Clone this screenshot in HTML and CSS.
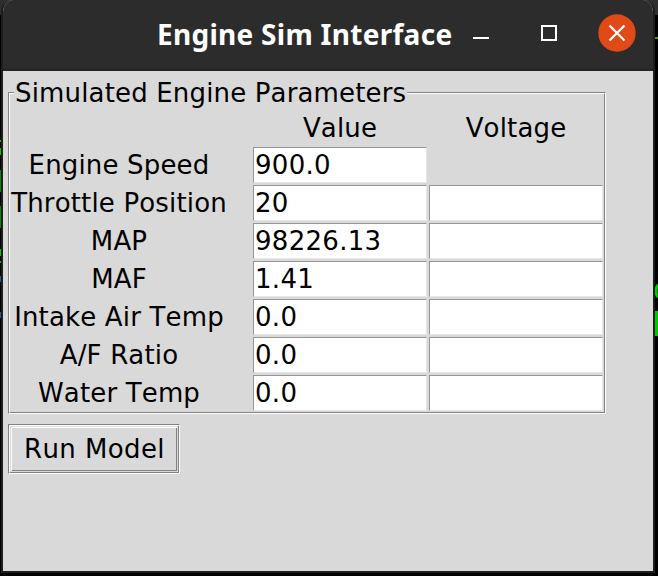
FILE: index.html
```html
<!DOCTYPE html>
<html lang="en">
<head>
<meta charset="utf-8">
<title>Engine Sim Interface</title>
<link rel="stylesheet" href="styles.css">
</head>
<body>
<svg class="desktop" width="658" height="576" viewBox="0 0 658 576" aria-hidden="true">
  <path fill="#2e2e2e" d="M0 0h12v15H0zM646 0h12v15h-12z"/>
  <path fill="#00c800" d="M0 140h1v2H0zM0 148h1v7H0zM0 249h1v7H0zM0 261h1v2H0zM655 311h3v25h-3z"/>
  <path fill="#008c00" d="M0 170h1v22H0zM0 206h1v22H0z"/>
  <path fill="#2a559c" d="M0 276h1v6H0zM0 312h1v6H0z"/>
  <path fill="#4e9a06" d="M655 37h3v2h-3z"/>
  <path fill="none" stroke="#00c800" stroke-width="3" d="M659 285q-3 1-3 6t3 6"/>
</svg>
<main class="window">
  <header class="titlebar">
    <h1 class="title">Engine Sim Interface</h1>
    <svg class="controls" width="166" height="40" viewBox="0 0 166 40" aria-hidden="true">
      <path fill="#fff" d="M3 24h16v2H3z"/>
      <path fill="none" stroke="#fff" stroke-width="2" d="M72 13h14v14H72z"/>
      <circle cx="147" cy="20" r="18.7" fill="#df4a16"/>
      <path fill="none" stroke="#fff" stroke-width="2.2" d="M139.500 12.500l15 15m0-15l-15 15"/>
    </svg>
  </header>
  <div class="content">
    <fieldset class="params">
      <legend class="legend">Simulated Engine Parameters</legend>
      <div class="grid">
        <span class="head value-head">Value</span><span class="head">Voltage</span>
        <span class="name">Engine Speed</span><span class="entry">900.0</span><span></span>
        <span class="name">Throttle Position</span><span class="entry">20</span><span class="entry"></span>
        <span class="name">MAP</span><span class="entry">98226.13</span><span class="entry"></span>
        <span class="name">MAF</span><span class="entry">1.41</span><span class="entry"></span>
        <span class="name">Intake Air Temp</span><span class="entry">0.0</span><span class="entry"></span>
        <span class="name">A/F Ratio</span><span class="entry">0.0</span><span class="entry"></span>
        <span class="name">Water Temp</span><span class="entry">0.0</span><span class="entry"></span>
      </div>
    </fieldset>
    <div class="button-frame"><button class="run" type="button">Run Model</button></div>
  </div>
</main>
</body>
</html>
```
FILE: styles.css
```css
* { box-sizing: border-box; }
body {
  margin: 0;
  width: 658px;
  height: 576px;
  overflow: hidden;
  background: #000;
  color: #000;
  font: 26px/32px "DejaVu Sans", sans-serif;
  font-kerning: none;
  letter-spacing: 0.16px;
}
.desktop { position: absolute; left: 0; top: 0; }
.window {
  position: relative;
  width: 654px;
  height: 573px;
  margin-left: 1px;
  border: solid #1d1d1d;
  border-width: 0 2px 2px;
  border-radius: 12px 12px 0 0;
  background: #d9d9d9;
  overflow: hidden;
}
.titlebar {
  display: flex;
  align-items: flex-start;
  height: 71px;
  padding: 13px 0 0 154px;
  background: #2c2c2c;
  border-bottom: 2px solid #242424;
}
.title {
  margin: 3px 0 0;
  width: 313px;
  color: #fff;
  font: bold 28px/36px "Noto Sans", sans-serif;
  letter-spacing: 0.28px;
  white-space: nowrap;
}
.controls { flex: none; }
.content { padding: 5px; }
.params {
  position: relative;
  width: 598px;
  height: 322px;
  margin: 16px 0 0;
  padding: 0;
  border: 1px solid #828282;
  border-right-color: #fff;
  border-bottom-color: #fff;
}
.params::before {
  content: "";
  position: absolute;
  inset: 0;
  border: 1px solid #fff;
  border-right-color: #828282;
  border-bottom-color: #828282;
}
.legend {
  position: absolute;
  left: 5px;
  top: -16px;
  padding: 0 1px;
  background: #d9d9d9;
  white-space: nowrap;
}
.grid {
  position: relative;
  display: grid;
  grid-template-columns: 241px 174px 174px;
  column-gap: 2px;
  grid-template-rows: 36px;
  grid-auto-rows: 36px;
  row-gap: 2px;
  padding: 16px 0 0 1px;
}
.head, .name {
  text-align: center;
  line-height: 36px;
  white-space: nowrap;
}
.head { line-height: 38px; }
.value-head { grid-column: 2; }
.name { width: 218px; }
.entry {
  padding: 0 1px;
  line-height: 35px;
  letter-spacing: 0.3px;
  background: #fff;
  border: 1px solid #969696;
  border-right-color: #e6e6e6;
  border-bottom-color: #e6e6e6;
}
.button-frame {
  width: 172px;
  height: 50px;
  margin-top: 10px;
  border: 1px solid #828282;
  border-right-color: #fff;
  border-bottom-color: #fff;
}
.run {
  display: block;
  width: 170px;
  height: 48px;
  padding: 0 0 0 1px;
  border: 1px solid #fff;
  border-right-color: #828282;
  border-bottom-color: #828282;
  background: #d9d9d9;
  box-shadow: inset 1px 1px #d9d9d9, inset -1px -1px #d9d9d9, inset 2px 2px #fff, inset -2px -2px #828282;
  color: #000;
  font: inherit;
  font-kerning: none;
  letter-spacing: 0.4px;
}
```
